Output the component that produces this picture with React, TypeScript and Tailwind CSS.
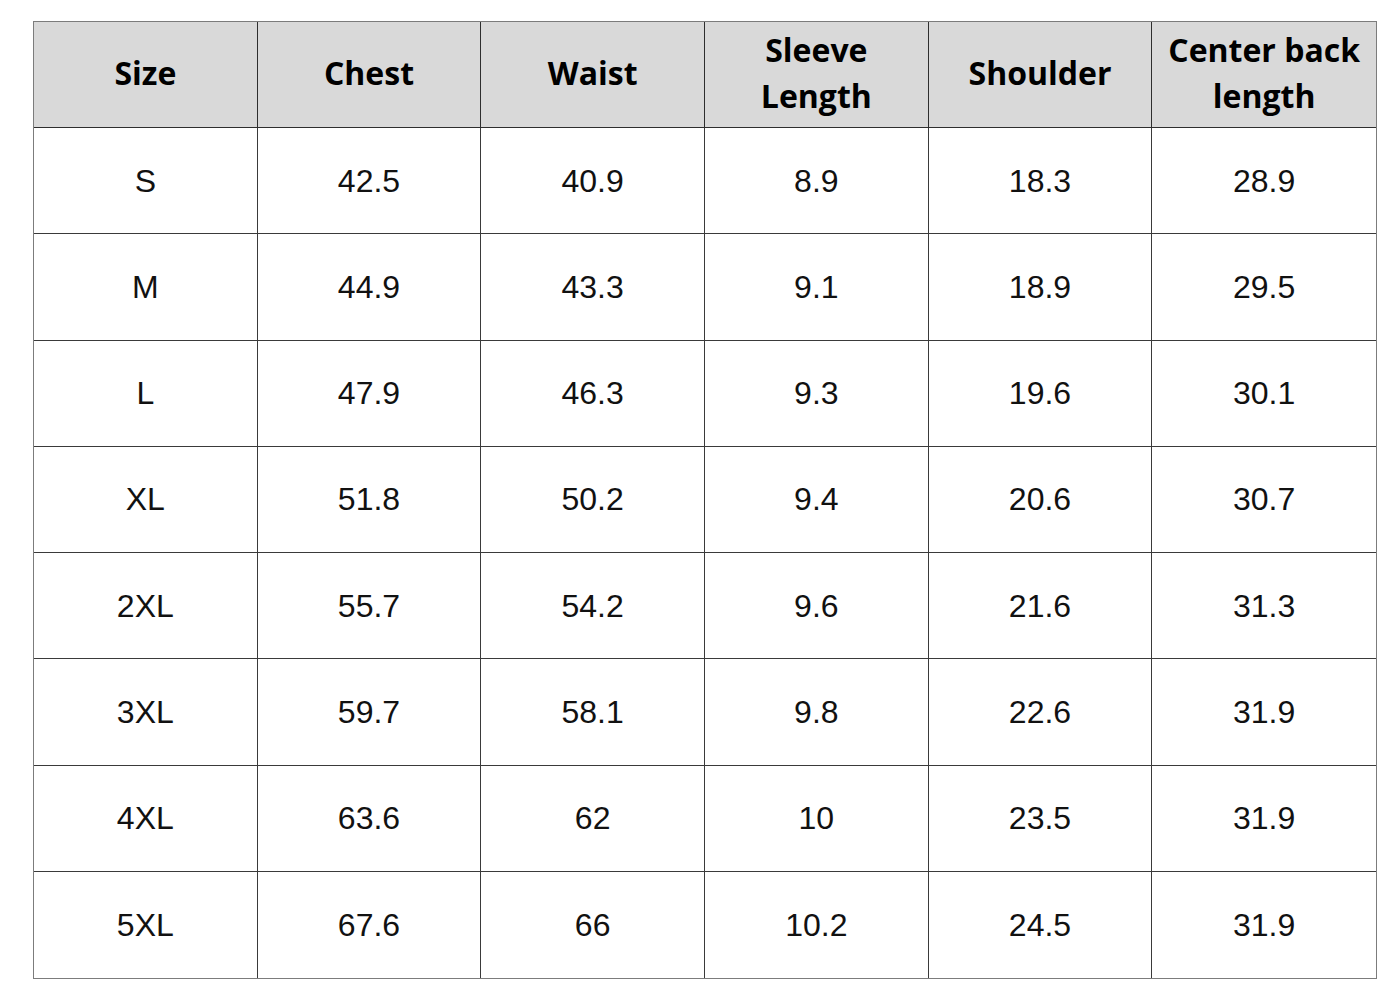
const headers = [["Size"], ["Chest"], ["Waist"], ["Sleeve", "Length"], ["Shoulder"], ["Center back", "length"]];

const rows = [
  ["S", "42.5", "40.9", "8.9", "18.3", "28.9"],
  ["M", "44.9", "43.3", "9.1", "18.9", "29.5"],
  ["L", "47.9", "46.3", "9.3", "19.6", "30.1"],
  ["XL", "51.8", "50.2", "9.4", "20.6", "30.7"],
  ["2XL", "55.7", "54.2", "9.6", "21.6", "31.3"],
  ["3XL", "59.7", "58.1", "9.8", "22.6", "31.9"],
  ["4XL", "63.6", "62", "10", "23.5", "31.9"],
  ["5XL", "67.6", "66", "10.2", "24.5", "31.9"],
];

export default function App() {
  return (
    <div className="w-[1400px] h-[1000px] bg-white pt-[21px] pl-[33px]">
      <div className="w-[1344px] h-[958px] border border-[#7c7c7c] grid grid-cols-6 grid-rows-9">
        {headers.map((h, i) => (
          <div
            key={"h" + i}
            className={
              "bg-[#d9d9d9] flex flex-col items-center justify-center pb-[4px] border-b border-[#2e2e2e] text-[32px] leading-[46px] font-bold text-black font-['Open_Sans',sans-serif] " +
              (i < 5 ? "border-r" : "")
            }
          >
            {h.map((l) => (
              <span key={l}>{l}</span>
            ))}
          </div>
        ))}
        {rows.map((r, ri) =>
          r.map((c, ci) => (
            <div
              key={ri + "-" + ci}
              className={
                "flex items-center justify-center border-[#3a3a3a] text-[32px] text-[#111] font-['Liberation_Sans',Arial,sans-serif] " +
                (ci < 5 ? "border-r " : "") +
                (ri < 7 ? "border-b" : "")
              }
            >
              {c}
            </div>
          ))
        )}
      </div>
    </div>
  );
}
